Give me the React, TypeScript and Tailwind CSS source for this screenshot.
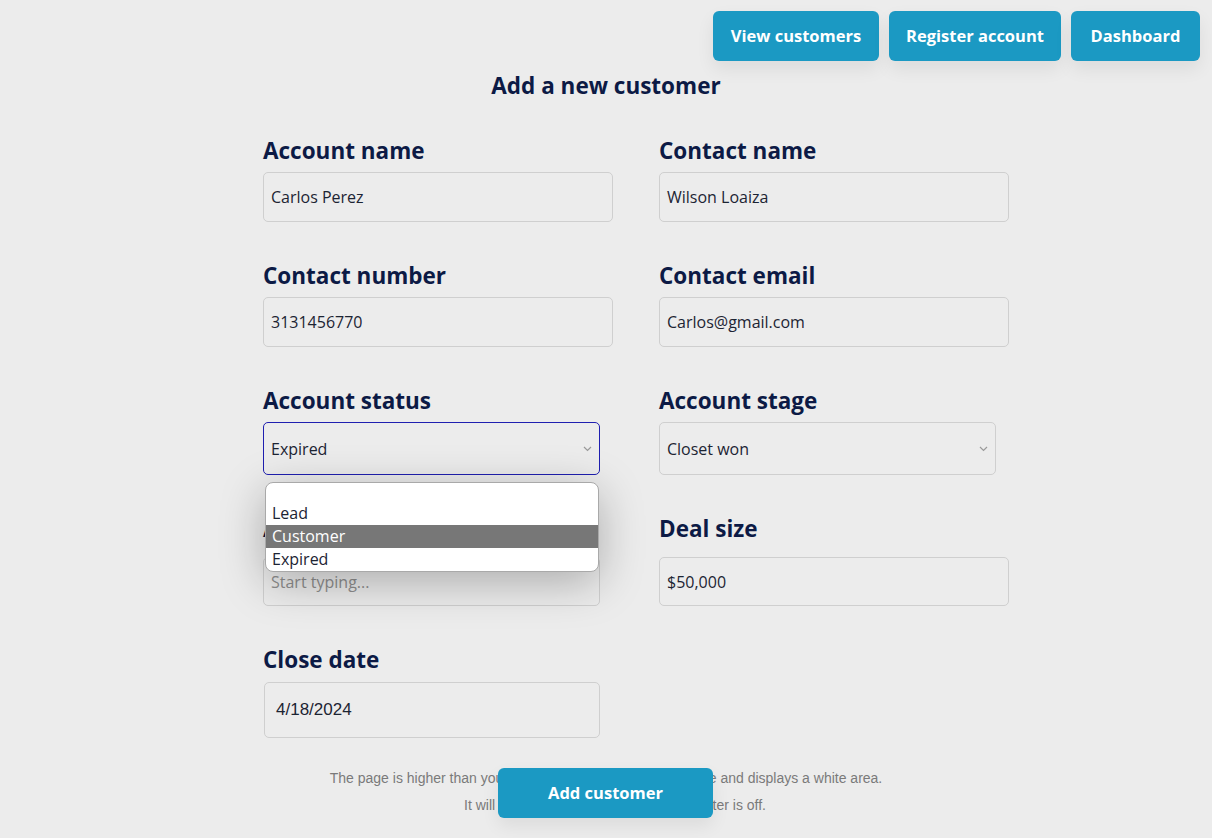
import React from 'react';

const font = { fontFamily: '"Open Sans", "Noto Sans", sans-serif' };

const Label: React.FC<{ children: React.ReactNode }> = ({ children }) => (
  <label className="block h-[30px] text-[22.5px] leading-[30px] font-bold text-[#0c1a45]">{children}</label>
);

const TextField: React.FC<{ label: string; value?: string; placeholder?: string; width?: string }> = ({
  label,
  value,
  placeholder,
  width = 'w-[350px]',
}) => (
  <div className="flex flex-col">
    <Label>{label}</Label>
    <div
      className={`mt-[6px] h-[50px] ${width} rounded-[5px] border border-[#cfcfcf] bg-[#ececec] px-[7px] flex items-center text-[16px] ${
        value ? 'text-[#1c2433]' : 'text-[#8f8f8f]'
      }`}
    >
      {value ?? placeholder}
    </div>
  </div>
);

const Chevron = () => (
  <svg width="9" height="6" viewBox="0 0 9 6" fill="none" className="text-[#9a9a9a]">
    <path d="M1 1l3.5 3.5L8 1" stroke="currentColor" strokeWidth="1.2" />
  </svg>
);

const App: React.FC = () => {
  const navItems = ['View customers', 'Register account', 'Dashboard'];

  return (
    <div className="min-h-[838px] w-full bg-[#ececec] overflow-hidden" style={font}>
      {/* top navigation */}
      <nav className="flex justify-end gap-[10px] pt-[11px] pr-[12px]">
        {navItems.map((item, i) => (
          <button
            key={item}
            className={`h-[50px] rounded-[6px] bg-[#1b99c3] text-white text-[16.5px] font-bold shadow-[0_8px_18px_rgba(0,0,0,0.07)] ${
              i === 0 ? 'w-[166px]' : i === 1 ? 'w-[172px]' : 'w-[129px]'
            }`}
          >
            {item}
          </button>
        ))}
      </nav>

      <h1 className="mt-[10px] text-center text-[22.5px] leading-[30px] font-bold text-[#0c1a45]">
        Add a new customer
      </h1>

      <form className="mt-[35px] ml-[263px] grid grid-cols-[396px_396px] gap-y-[39px]">
        <TextField label="Account name" value="Carlos Perez" />
        <TextField label="Contact name" value="Wilson Loaiza" />

        <TextField label="Contact number" value="3131456770" />
        <TextField label="Contact email" value="Carlos@gmail.com" />

        {/* account status - open select */}
        <div className="flex flex-col">
          <Label>Account status</Label>
          <div className="relative mt-[6px] z-20">
            <div className="h-[53px] w-[337px] rounded-[5px] border border-[#1f1fb0] bg-[#ececec] pl-[7px] pr-[7px] flex items-center justify-between text-[16px] text-[#1c2433]">
              <span>Expired</span>
              <Chevron />
            </div>
            <ul className="absolute left-[2px] top-[60px] w-[334px] h-[90px] rounded-[8px] border border-[#a9a9a9] bg-white text-[16px] leading-[23px] text-[#1c2433] shadow-[0_10px_45px_rgba(0,0,0,0.28)] overflow-hidden">
              <li className="h-[19px]"></li>
              <li className="px-[6px]">Lead</li>
              <li className="px-[6px] bg-[#777777] text-white">Customer</li>
              <li className="px-[6px]">Expired</li>
            </ul>
          </div>
        </div>
        <div className="flex flex-col">
          <Label>Account stage</Label>
          <div className="mt-[6px] h-[53px] w-[337px] rounded-[5px] border border-[#cfcfcf] bg-[#ececec] px-[7px] flex items-center justify-between text-[16px] text-[#1c2433]">
            <span>Closet won</span>
            <Chevron />
          </div>
        </div>

        <div className="flex flex-col">
          <Label>Account owner</Label>
          <div className="mt-[13px] h-[49px] w-[337px] rounded-[5px] border border-[#cfcfcf] bg-[#ececec] px-[7px] flex items-center text-[16px] text-[#8f8f8f]">
            Start typing...
          </div>
        </div>
        <div className="flex flex-col">
          <Label>Deal size</Label>
          <div className="mt-[13px] h-[49px] w-[350px] rounded-[5px] border border-[#cfcfcf] bg-[#ececec] px-[7px] flex items-center text-[16px] text-[#1c2433]">
            $50,000
          </div>
        </div>

        <div className="flex flex-col">
          <Label>Close date</Label>
          <div
            className="mt-[7px] ml-[1px] h-[56px] w-[336px] rounded-[5px] border border-[#cfcfcf] bg-[#ececec] px-[11px] flex items-center text-[17px] text-[#1c2433]"
            style={{ fontFamily: '"Liberation Sans", Arial, sans-serif' }}
          >
            4/18/2024
          </div>
        </div>
      </form>

      {/* footer note with the submit button on top */}
      <div className="relative mt-[27px]">
        <div
          className="text-center text-[14px] leading-[27px] text-[#7a7a7a]"
          style={{ fontFamily: '"Liberation Sans", Arial, sans-serif' }}
        >
          <p>The page is higher than your screen, so it is not entirely visible and displays a white area.</p>
          <p className="pl-[18px]">It will be fixed once the screenshot's limiter is off.</p>
        </div>
        <button className="absolute left-[498px] top-[3px] h-[50px] w-[215px] rounded-[6px] bg-[#1b99c3] text-white text-[16.5px] font-bold shadow-[0_8px_18px_rgba(0,0,0,0.07)]">
          Add customer
        </button>
      </div>
    </div>
  );
};

export default App;
